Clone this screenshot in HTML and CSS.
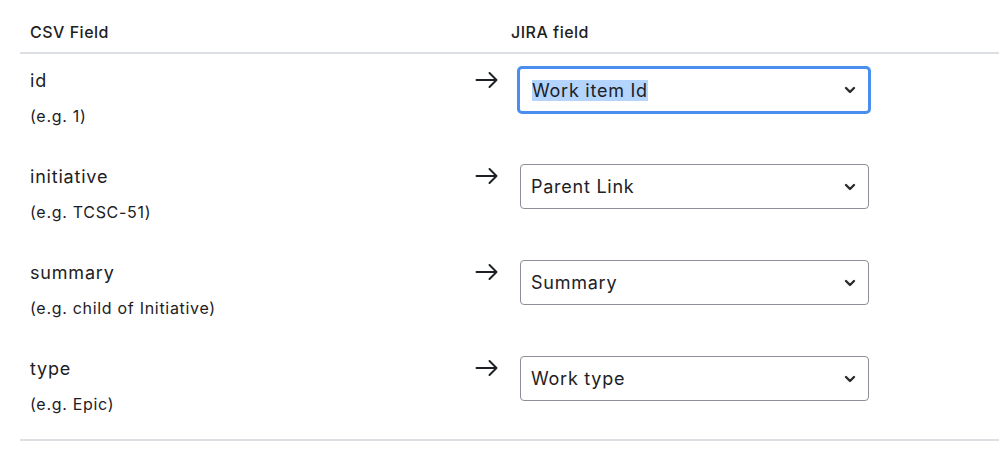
FILE: index.html
```html
<!DOCTYPE html>
<html lang="en">
<head>
    <meta charset="UTF-8">
    <meta name="viewport" content="width=device-width, initial-scale=1.0">
    <title>CSV field mapping</title>
    <link rel="stylesheet" href="styles.css">
</head>
<body>
    <div class="mapping">
        <div class="mapping-head">
            <div class="head-csv">CSV Field</div>
            <div class="head-jira">JIRA field</div>
        </div>

        <div class="mapping-row">
            <div class="csv-cell">
                <div class="csv-name">id</div>
                <div class="csv-example">(e.g. 1)</div>
            </div>
            <div class="arrow-cell">
                <svg width="24" height="18" viewBox="0 0 24 18"><path d="M1.5 9H21.5M14.5 2L21.5 9L14.5 16" fill="none" stroke="#1d2125" stroke-width="2" stroke-linecap="round" stroke-linejoin="round"/></svg>
            </div>
            <div class="jira-cell">
                <div class="field-select focused">
                    <span class="value"><span class="selected-text">Work item Id</span></span>
                    <svg class="chevron" width="12" height="8" viewBox="0 0 12 8"><path d="M2 2L6 6L10 2" fill="none" stroke="#2c2c2c" stroke-width="2.4" stroke-linecap="round" stroke-linejoin="round"/></svg>
                </div>
            </div>
        </div>

        <div class="mapping-row">
            <div class="csv-cell">
                <div class="csv-name">initiative</div>
                <div class="csv-example">(e.g. TCSC-51)</div>
            </div>
            <div class="arrow-cell">
                <svg width="24" height="18" viewBox="0 0 24 18"><path d="M1.5 9H21.5M14.5 2L21.5 9L14.5 16" fill="none" stroke="#1d2125" stroke-width="2" stroke-linecap="round" stroke-linejoin="round"/></svg>
            </div>
            <div class="jira-cell">
                <div class="field-select">
                    <span class="value">Parent Link</span>
                    <svg class="chevron" width="12" height="8" viewBox="0 0 12 8"><path d="M2 2L6 6L10 2" fill="none" stroke="#2c2c2c" stroke-width="2.4" stroke-linecap="round" stroke-linejoin="round"/></svg>
                </div>
            </div>
        </div>

        <div class="mapping-row">
            <div class="csv-cell">
                <div class="csv-name">summary</div>
                <div class="csv-example">(e.g. child of Initiative)</div>
            </div>
            <div class="arrow-cell">
                <svg width="24" height="18" viewBox="0 0 24 18"><path d="M1.5 9H21.5M14.5 2L21.5 9L14.5 16" fill="none" stroke="#1d2125" stroke-width="2" stroke-linecap="round" stroke-linejoin="round"/></svg>
            </div>
            <div class="jira-cell">
                <div class="field-select">
                    <span class="value">Summary</span>
                    <svg class="chevron" width="12" height="8" viewBox="0 0 12 8"><path d="M2 2L6 6L10 2" fill="none" stroke="#2c2c2c" stroke-width="2.4" stroke-linecap="round" stroke-linejoin="round"/></svg>
                </div>
            </div>
        </div>

        <div class="mapping-row">
            <div class="csv-cell">
                <div class="csv-name">type</div>
                <div class="csv-example">(e.g. Epic)</div>
            </div>
            <div class="arrow-cell">
                <svg width="24" height="18" viewBox="0 0 24 18"><path d="M1.5 9H21.5M14.5 2L21.5 9L14.5 16" fill="none" stroke="#1d2125" stroke-width="2" stroke-linecap="round" stroke-linejoin="round"/></svg>
            </div>
            <div class="jira-cell">
                <div class="field-select">
                    <span class="value">Work type</span>
                    <svg class="chevron" width="12" height="8" viewBox="0 0 12 8"><path d="M2 2L6 6L10 2" fill="none" stroke="#2c2c2c" stroke-width="2.4" stroke-linecap="round" stroke-linejoin="round"/></svg>
                </div>
            </div>
        </div>
    </div>
</body>
</html>
```

FILE: styles.css
```css
body {
    margin: 0;
    background: #fff;
    font-family: 'Inter', 'Noto Sans', sans-serif;
    color: #1d2125;
}

.mapping {
    margin-left: 20px;
    padding-bottom: 1px;
    border-bottom: 2px solid #dcdfe4;
}

.mapping-head {
    display: flex;
    padding: 20px 0 8px;
    border-bottom: 2px solid #dcdfe4;
    font-size: 16px;
    line-height: 24px;
    font-weight: 500;
    letter-spacing: 0.5px;
}

.head-csv {
    width: 471px;
    padding-left: 10px;
}

.head-jira {
    padding-left: 10px;
}

.mapping-row {
    display: grid;
    grid-template-columns: 455px 45px 349px;
    height: 96px;
    box-sizing: border-box;
    padding-top: 13px;
}

.csv-cell {
    padding-left: 10px;
}

.csv-name {
    font-size: 18px;
    line-height: 27px;
    letter-spacing: 0.8px;
}

.csv-example {
    margin-top: 11px;
    font-size: 16px;
    line-height: 22px;
    letter-spacing: 0.7px;
}

.arrow-cell {
    padding-top: 4px;
}

.field-select {
    display: flex;
    align-items: center;
    justify-content: space-between;
    height: 45px;
    box-sizing: border-box;
    margin-top: 1px;
    padding: 0 12px 0 10px;
    border: 1px solid #8c8f97;
    border-radius: 4px;
    background: #fff;
    font-size: 18px;
    letter-spacing: 0.75px;
}

.field-select.focused {
    margin: -1px -2px 0 -3px;
    height: 48px;
    padding-left: 12px;
    border: 3px solid #4a8ef0;
    border-radius: 5px;
}

.selected-text {
    background: #b3d4fc;
}

.chevron {
    display: block;
}
```
